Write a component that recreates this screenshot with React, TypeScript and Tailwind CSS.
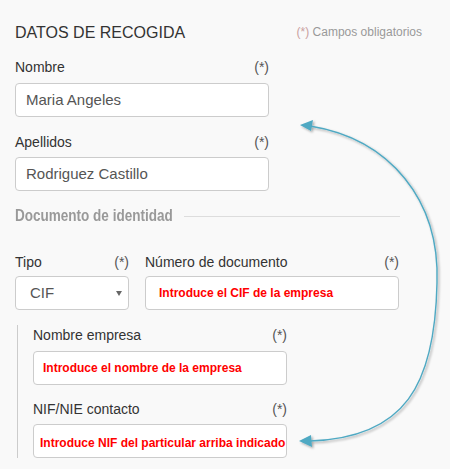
import React from "react";

const font = { fontFamily: '"Liberation Sans", Arial, sans-serif' };

function Label({ text, width }: { text: string; width: string }) {
  return (
    <div className={`${width} flex justify-between h-[20px] leading-[20px] text-[14px] text-[#333]`}>
      <span>{text}</span>
      <span className="text-[#555]">(*)</span>
    </div>
  );
}

function TextBox({ children, width, pad }: { children: React.ReactNode; width: string; pad: string }) {
  return (
    <div
      className={`${width} ${pad} h-[34px] flex items-center bg-white border border-[#ccc] rounded-[4px] overflow-hidden whitespace-nowrap`}
    >
      {children}
    </div>
  );
}

function Hint({ text }: { text: string }) {
  return <span className="text-[12px] font-bold text-[#f00]">{text}</span>;
}

function LinkArrow() {
  return (
    <svg className="absolute left-0 top-0 pointer-events-none" width="450" height="469" viewBox="0 0 450 469">
      <defs>
        <filter id="soft" x="-20%" y="-20%" width="140%" height="140%">
          <feDropShadow dx="1.5" dy="1.5" stdDeviation="1" floodColor="#000" floodOpacity="0.35" />
        </filter>
      </defs>
      <g filter="url(#soft)">
        <path
          d="M310 126 C390 139, 440 200, 437 283 C435 385, 405 438, 310 441"
          fill="none"
          stroke="#4fa9c3"
          strokeWidth="1.4"
        />
        <polygon points="300,125 313,120 311,131" fill="#4fa9c3" />
        <polygon points="299,441 311,435 312,447" fill="#4fa9c3" />
      </g>
    </svg>
  );
}

export default function App() {
  return (
    <div className="relative w-[450px] h-[469px] overflow-hidden bg-[#f9f9f9] pl-[15px] pt-[23px]" style={font}>
      <div className="w-[407px] flex justify-between items-start">
        <h1 className="text-[16px] leading-[20px] text-[#333]">DATOS DE RECOGIDA</h1>
        <span className="mt-[1px] text-[12px] leading-[16px] text-[#999]">
          <span className="text-[#c9a0a0]">(*)</span> Campos obligatorios
        </span>
      </div>

      <div className="mt-[14px]">
        <Label text="Nombre" width="w-[254px]" />
        <div className="mt-[6px]">
          <TextBox width="w-[254px]" pad="pl-[10px]">
            <span className="text-[15px] text-[#555]">Maria Angeles</span>
          </TextBox>
        </div>
      </div>

      <div className="mt-[15px]">
        <Label text="Apellidos" width="w-[254px]" />
        <div className="mt-[5px]">
          <TextBox width="w-[254px]" pad="pl-[10px]">
            <span className="text-[15px] text-[#555]">Rodriguez Castillo</span>
          </TextBox>
        </div>
      </div>

      {/* condensed section heading */}
      <div className="mt-[15px] w-[385px] h-[20px] flex items-center gap-[11px]">
        <div className="w-[158px] h-[20px] leading-[20px] shrink-0 whitespace-nowrap">
          <h2 className="inline-block origin-left scale-x-[0.845] text-[16px] leading-[20px] font-bold text-[#999]">
            Documento de identidad
          </h2>
        </div>
        <div className="flex-1 h-px bg-[#ddd]" />
      </div>

      <div className="mt-[26px] flex gap-[16px]">
        <div>
          <Label text="Tipo" width="w-[114px]" />
          <div className="mt-[4px] w-[114px] h-[34px] pl-[14px] pr-[6px] flex items-center justify-between bg-white border border-[#ccc] rounded-[4px]">
            <span className="text-[15px] text-[#555]">CIF</span>
            <svg width="6" height="6" viewBox="0 0 6 6">
              <polygon points="0,1 6,1 3,6" fill="#666" />
            </svg>
          </div>
        </div>
        <div>
          <Label text="Número de documento" width="w-[254px]" />
          <div className="mt-[4px]">
            <TextBox width="w-[254px]" pad="pl-[13px]">
              <Hint text="Introduce el CIF de la empresa" />
            </TextBox>
          </div>
        </div>
      </div>

      <div className="mt-[15px] ml-[2px] w-[272px] border-l border-[#ccc] pl-[15px]">
        <Label text="Nombre empresa" width="w-[254px]" />
        <div className="mt-[6px]">
          <TextBox width="w-[254px]" pad="pl-[9px]">
            <Hint text="Introduce el nombre de la empresa" />
          </TextBox>
        </div>
        <div className="mt-[14px]">
          <Label text="NIF/NIE contacto" width="w-[254px]" />
          <div className="mt-[5px]">
            <TextBox width="w-[254px]" pad="pl-[6px] pt-[3px]">
              <Hint text="Introduce NIF del particular arriba indicado" />
            </TextBox>
          </div>
        </div>
      </div>

      <LinkArrow />
    </div>
  );
}
